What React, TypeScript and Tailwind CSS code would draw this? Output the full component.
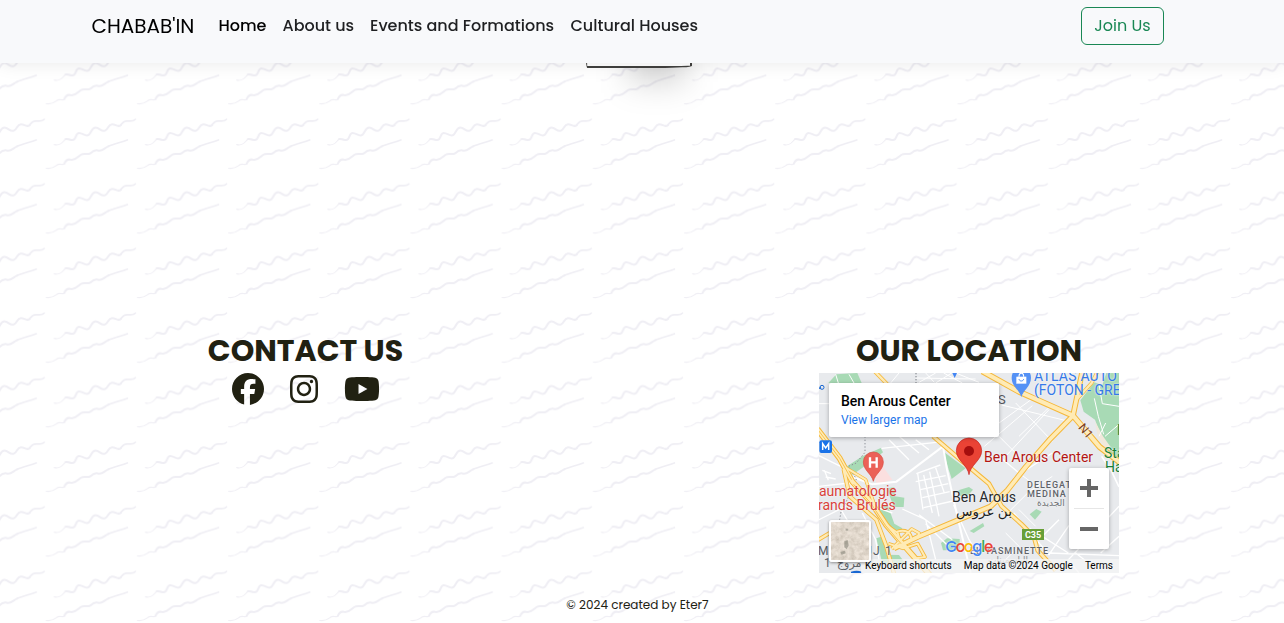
import React from "react";
import { FaFacebook, FaInstagram, FaYoutube } from "react-icons/fa6";

function WavyBackground() {
  return (
    <svg className="absolute inset-0 -z-10 h-full w-full" aria-hidden="true">
      <defs>
        <pattern
          id="waves"
          width="273.55"
          height="193.8"
          patternUnits="userSpaceOnUse"
          patternTransform="translate(0 60) scale(0.33333) translate(137 165.5)"
        >
          <g transform="translate(-137 -165.5)" fill="none" stroke="#efeef4" strokeLinecap="round" strokeLinejoin="round">
            <path strokeWidth="3.5" d="M163 254C178 257 184 252 191 243C196 235 204 236 211 239" />
            <path
              strokeWidth="6"
              d="M197 237C210 236 216 245 223 238C230 230 228 219 237 219C249 219 257 231 266 225C276 216 275 203 287 203C299 203 303 216 315 212C326 207 324 194 336 193C347 192 353 204 363 195"
            />
            <path strokeWidth="5" d="M362 195C371 185 373 182 384 183C393 183 400 185 406 178" />
            <path strokeWidth="3.5" d="M139 325C159 328 165 319 173 314C181 309 188 318 193 311" />
            <path
              strokeWidth="6"
              d="M193 311C197 301 202 297 211 299C228 302 234 290 243 284C251 279 264 285 271 280C280 272 286 268 296 272C308 274 313 264 325 259"
            />
            <path strokeWidth="5" d="M325 259C344 251 364 247 382 240" />
          </g>
        </pattern>
      </defs>
      <rect width="100%" height="100%" fill="url(#waves)" />
    </svg>
  );
}

function Navbar() {
  return (
    <header className="fixed inset-x-0 top-0 z-10 flex h-[63px] items-start bg-[#f8f9fb] pt-[7px] pr-[120px] pl-[91.5px] shadow-[0_2px_16px_rgba(0,0,0,0.08)]">
      <a className="w-[127px] pt-[4px] text-[20px] leading-[30px] whitespace-nowrap text-black" href="#">
        CHABAB'IN
      </a>
      <nav className="flex gap-4 pt-[7px] text-[16px] leading-6 font-medium whitespace-nowrap text-[#1f2022]">
        <a className="w-[48px] text-black" href="#">Home</a>
        <a className="w-[71.5px]" href="#">About us</a>
        <a className="w-[184.5px]" href="#">Events and Formations</a>
        <a className="w-[130px]" href="#">Cultural Houses</a>
      </nav>
      <button className="ml-auto h-[38px] w-[83px] rounded-md border border-[#198754] text-[16px] leading-6 whitespace-nowrap text-[#198754]">
        Join Us
      </button>
    </header>
  );
}

function Roads() {
  return (
    <svg className="absolute inset-0 h-full w-full" viewBox="0 0 900 600" aria-hidden="true">
      <rect width="900" height="600" fill="#e8eaed" />
      <g fill="#a8dab5">
        <path d="M28 30L52 4L115 0L128 30Z" />
        <path d="M784 82L826 28L850 36L862 0H900V285L856 215L828 140L794 116Z" />
        <path d="M84 280L130 250L185 225L192 238L165 260L100 305Z" />
        <path d="M374 236L440 286L398 318L386 280Z" />
        <path d="M204 346L226 342L228 370L256 374L254 402L224 402Z" />
        <path d="M178 404L206 396L226 452L250 466L232 494L205 460Z" />
        <path d="M366 510L384 496L422 498V532H372Z" />
        <path d="M418 352L450 342L462 350L448 366L424 370Z" />
        <path d="M632 424L652 408L668 416L648 440Z" />
        <path d="M452 474L492 450L496 460L464 480Z" />
        <path d="M172 496L195 488L208 520L202 545L240 546L260 572H190Z" />
      </g>
      <path d="M828 145L852 190L885 236L858 226L836 190Z" fill="#f1e8dc" />
      <path d="M166 282L190 278L220 320L172 334Z" fill="#fbdfdf" />

      <g fill="none" stroke="#fff" strokeWidth="4">
        <path d="M100 312L160 334L232 326L372 220L384 290L406 390L455 600" strokeWidth="6" />
        <path d="M188 226L372 206M210 200L270 260M240 190L300 240M290 200L330 230" />
        <path d="M292 302L364 276M290 326L380 308M304 350L388 332M310 374L392 356M314 404L402 384M314 306L340 420M332 296L360 430M350 284L376 360M296 302L312 410" />
        <path d="M548 96L750 145M496 220L640 98M540 150L650 70M590 90L700 205M540 190L600 250M620 72L700 94L600 190M560 250L690 110" strokeWidth="3" />
        <path d="M0 92H30M50 4L58 30M90 4L105 30M240 0L215 30M300 28L350 0M320 0L346 28M350 30L398 0M374 0L430 30M410 0L480 28M290 15L470 18" strokeWidth="3" />
        <path d="M404 396L450 500L480 550M300 425L400 500M320 452L388 520M250 408L320 440L350 560M600 300L540 250M584 315L700 240" />
        <path d="M584 420L690 545L748 460L820 390M632 466L748 540M660 500L720 440M900 400L748 560L780 600M690 540L900 548M845 540L900 490M770 540L840 595" />
        <path d="M570 416L630 356L700 310M640 330L600 300M560 480L600 520L560 560M600 410L650 460" strokeWidth="3" />
        <path d="M0 248L65 280M0 340L90 330L160 398L220 420M60 400L90 450L160 480M0 440L80 400M130 420L170 500L180 560" />
        <path d="M10 292L36 302M20 312L50 318M16 292L28 322" />
        <path d="M826 76L838 130L854 184M840 34L850 92L900 100M858 190L898 156M860 150L840 190" strokeWidth="3" />
        <path d="M848 250L878 296L900 342" strokeWidth="5" />
      </g>

      <path d="M138 190V238L112 270L88 280L112 318L100 350L66 416L62 440" fill="none" stroke="#8c9097" strokeWidth="3" strokeDasharray="4 6" />
      <path d="M291 0V30" fill="none" stroke="#777b80" strokeWidth="3" strokeDasharray="4 5" />

      <g fill="none" strokeLinejoin="round">
        <g stroke="#f5b83a">
          <path d="M168 -4L205 34" strokeWidth="12" />
          <path d="M-5 168L62 256L100 326L155 386L202 456L252 514L332 605" strokeWidth="18" />
          <path d="M74 288L92 370L172 440L202 520L226 605" strokeWidth="13" />
          <path d="M74 280L140 320L166 394" strokeWidth="10" />
          <path d="M202 456L236 480L250 526M278 500Q272 464 234 476M218 528L278 468L300 480L296 496M208 512L252 526L296 512L318 552L292 556" strokeWidth="11" />
          <path d="M-5 502L32 480" strokeWidth="12" />
          <path d="M225 526L296 492L420 440L515 400L565 352L620 282L690 202L762 128L790 -5" strokeWidth="17" />
          <path d="M342 190L426 262L510 332L548 400L606 452L645 492L656 532L710 592" strokeWidth="14" />
          <path d="M490 -5L600 56L762 128L842 222L905 270" strokeWidth="18" />
          <path d="M762 128L772 80L818 30L836 -5" strokeWidth="11" />
        </g>
        <g stroke="#ffebb5">
          <path d="M168 -4L205 34" strokeWidth="7" />
          <path d="M-5 168L62 256L100 326L155 386L202 456L252 514L332 605" strokeWidth="12" />
          <path d="M74 288L92 370L172 440L202 520L226 605" strokeWidth="8" />
          <path d="M74 280L140 320L166 394" strokeWidth="6" />
          <path d="M202 456L236 480L250 526M278 500Q272 464 234 476M218 528L278 468L300 480L296 496M208 512L252 526L296 512L318 552L292 556" strokeWidth="6" />
          <path d="M-5 502L32 480" strokeWidth="7" />
          <path d="M225 526L296 492L420 440L515 400L565 352L620 282L690 202L762 128L790 -5" strokeWidth="11" />
          <path d="M342 190L426 262L510 332L548 400L606 452L645 492L656 532L710 592" strokeWidth="8" />
          <path d="M490 -5L600 56L762 128L842 222L905 270" strokeWidth="12" />
          <path d="M762 128L772 80L818 30L836 -5" strokeWidth="7" />
        </g>
        <path d="M-5 168L62 256L98 320" stroke="#f5b83a" strokeWidth="2.5" />
        <path d="M104 334L155 390L200 458L246 512" stroke="#f5b83a" strokeWidth="2.5" />
      </g>
      <path d="M400 0H414L407 15Z" fill="#4285f4" />
      <circle cx="9" cy="43" r="6" fill="none" stroke="#1967d2" strokeWidth="3" />
      <path d="M0 46L6 44" stroke="#1967d2" strokeWidth="4" />
      <path d="M96 600V596Q114 590 128 596V600Z" fill="#1967d2" />
    </svg>
  );
}

function Pins() {
  return (
    <svg className="absolute inset-0 h-full w-full" viewBox="0 0 900 600" aria-hidden="true">
      <path d="M607 72C602 52 578 40 578 14C578 -25 636 -25 636 14C636 40 612 52 607 72Z" fill="#5491f5" />
      <path d="M592 11H622V32H592Z" fill="#fff" />
      <path d="M600 11C600 -3 614 -3 614 11" fill="none" stroke="#fff" strokeWidth="3.5" />
      <path d="M600 18C601 26 613 26 614 18" fill="none" stroke="#5491f5" strokeWidth="3" />
      <path d="M163 325C158 302 133 292 133 267A30 30 0 0 1 193 267C193 292 168 302 163 325Z" fill="#eb6157" stroke="#d9493f" strokeWidth="2" />
      <path d="M153 253V284M173 253V284M153 268H173" stroke="#fff" strokeWidth="7" fill="none" />
      <path d="M450 305C446 276 412 262 412 233A38 38 0 0 1 488 233C488 262 454 276 450 305Z" fill="#ea4335" stroke="#c5221f" strokeWidth="2" />
      <circle cx="450" cy="234" r="15" fill="#a50e0e" />
      <rect x="1" y="202" width="38" height="38" rx="6" fill="#1a73e8" />
      <path d="M11 231V212L20 225L29 212V231" fill="none" stroke="#fff" strokeWidth="4.5" />
    </svg>
  );
}

function SatelliteThumb() {
  return (
    <div className="absolute top-[147px] left-[10px] h-[42px] w-[42px] overflow-hidden rounded-[3px] border-2 border-white shadow-[0_1px_3px_rgba(0,0,0,0.4)]">
      <svg className="block h-full w-full" viewBox="0 0 114 114" aria-hidden="true">
        <defs>
          <filter id="ground" x="0" y="0" width="100%" height="100%">
            <feTurbulence type="fractalNoise" baseFrequency="0.07" numOctaves="4" seed="8" />
            <feColorMatrix values="0.4 0 0 0 0.55  0.38 0 0 0 0.49  0.38 0 0 0 0.41  0 0 0 0 1" />
          </filter>
        </defs>
        <rect width="114" height="114" filter="url(#ground)" />
        <path d="M44 20l8 0 0 6-8 0zM40 58l10-4 3 16-6 12-7-6zM28 90l14-4 2 8-12 4z" fill="#77776b" opacity="0.5" />
        <path d="M60 48L104 10M66 64L112 30M52 0L60 114" stroke="#e2dace" strokeWidth="3" opacity="0.5" />
      </svg>
    </div>
  );
}

function LocationMap() {
  return (
    <div className="relative h-[200px] w-[300px] overflow-hidden font-[Roboto,'DejaVu_Sans',sans-serif] whitespace-nowrap">
      <Roads />
      <span className="absolute top-[-5px] left-[215px] text-[14px] leading-[16px] tracking-[0.2px] text-[#3579e8] [text-shadow:0_0_2px_white]">ATLAS AUTO</span>
      <span className="absolute top-[9px] left-[215px] text-[14px] leading-[16px] text-[#3579e8] [text-shadow:0_0_2px_white]">(FOTON - GRE</span>
      <span className="absolute top-[20px] left-[179px] text-[13px] leading-[14px] text-[#55585d]">S</span>
      <span className="absolute top-[51px] left-[259px] rotate-50 text-[12px] leading-[14px] text-[#7a3f1c] [text-shadow:0_0_2px_white]">N1</span>
      <span className="absolute top-[49px] left-[298px] text-[14px] leading-[16px] text-[#188038]">F</span>
      <span className="absolute top-[72px] left-[285px] text-[14px] leading-[16px] text-[#188038] [text-shadow:0_0_2px_white]">Sta</span>
      <span className="absolute top-[86px] left-[286px] text-[14px] leading-[16px] text-[#188038] [text-shadow:0_0_2px_white]">Ha</span>
      <span className="absolute top-[76px] left-[165px] text-[14px] leading-[16px] tracking-[0.04px] text-[#b31412] [text-shadow:0_0_2px_white]">Ben Arous Center</span>
      <span className="absolute top-[110px] left-0 text-[14px] leading-[16px] text-[#d93f3a] [text-shadow:0_0_2px_white]">aumatologie</span>
      <span className="absolute top-[124px] left-[-1px] text-[14px] leading-[16px] text-[#d93f3a] [text-shadow:0_0_2px_white]">rands Brulés</span>
      <span className="absolute top-[116px] left-[133px] text-[14px] leading-[16px] text-[#27292c] [text-shadow:0_0_2px_white]">Ben Arous</span>
      <span className="absolute top-[130px] left-[137px] text-[13.5px] leading-[16px] text-[#1b1d20] [text-shadow:0_0_2px_white]">بن عروس</span>
      <span className="absolute top-[107px] left-[208px] text-[9px] leading-[10px] font-medium tracking-[1px] text-[#5f6368] [text-shadow:0_0_2px_white]">DELEGAT</span>
      <span className="absolute top-[116px] left-[208px] text-[9px] leading-[10px] font-medium tracking-[1px] text-[#5f6368] [text-shadow:0_0_2px_white]">MEDINA</span>
      <span className="absolute top-[125px] left-[218px] text-[9px] leading-[11px] text-[#6d7175] [text-shadow:0_0_2px_white]">الجديدة</span>
      <span className="absolute top-[156px] left-[203px] h-[11px] w-[22px] bg-[#689f38] text-center text-[9px] leading-[12px] font-bold text-white">C35</span>
      <span className="absolute top-[173px] left-[151px] text-[9px] leading-[10px] font-medium tracking-[0.95px] text-[#5f6368] [text-shadow:0_0_2px_white]">EL YASMINETTE</span>
      <span className="absolute top-[182px] left-[169px] text-[9px] leading-[11px] text-[#888b90]">الياسمينات</span>
      <span className="absolute top-[172px] left-[-1px] text-[12px] leading-[13px] tracking-[1px] text-[#55595e]">M</span>
      <span className="absolute top-[172px] left-[45px] text-[12px] leading-[13px] tracking-[1.2px] text-[#55595e] [text-shadow:0_0_2px_white]">UJ 1</span>
      <Pins />

      <div className="absolute top-[164px] left-[126.5px] flex font-[Poppins,sans-serif] text-[15px] leading-[20px] font-medium tracking-[-1.3px] [text-shadow:0_0_2px_white]">
        <span className="text-[#4285f4]">G</span>
        <span className="text-[#ea4335]">o</span>
        <span className="text-[#fbbc04]">o</span>
        <span className="text-[#4285f4]">g</span>
        <span className="text-[#34a853]">l</span>
        <span className="text-[#ea4335]">e</span>
      </div>

      <div className="absolute bottom-0 left-[42px] flex h-[14px] w-[258px] justify-between bg-[#f5f5f5]/75 pr-[6px] pl-[4px] text-[10px] leading-[14px] text-black">
        <span>Keyboard shortcuts</span>
        <span>Map data ©2024 Google</span>
        <span>Terms</span>
      </div>
      <span className="absolute top-[184px] left-[5px] text-[12px] leading-[13px] text-[#5f6368]">1</span>
      <span className="absolute top-[184px] left-[18px] text-[11px] leading-[14px] text-[#5f6368]">مروج</span>
      <SatelliteThumb />

      <div className="absolute top-[10px] left-[10px] flex h-[54px] w-[170px] flex-col rounded-[2px] bg-white pt-[10px] pl-[12px] shadow-[0_1px_4px_rgba(0,0,0,0.3)]">
        <span className="text-[14px] leading-[16px] font-medium text-black">Ben Arous Center</span>
        <span className="mt-[4px] text-[12px] leading-[14px] text-[#1a73e8]">View larger map</span>
      </div>

      <div className="absolute top-[95px] left-[250px] flex h-[81px] w-[40px] flex-col items-center rounded-[2px] bg-white shadow-[0_1px_4px_rgba(0,0,0,0.3)]">
        <svg className="h-[40px] w-[40px]" viewBox="0 0 40 40" aria-hidden="true">
          <path d="M11 20H29M20 11V29" stroke="#666" strokeWidth="4" />
        </svg>
        <div className="h-px w-[30px] bg-[#e6e6e6]" />
        <svg className="h-[40px] w-[40px]" viewBox="0 0 40 40" aria-hidden="true">
          <path d="M11 20H29" stroke="#666" strokeWidth="4" />
        </svg>
      </div>
    </div>
  );
}

export default function App() {
  return (
    <div className="relative isolate flex h-[623px] flex-col overflow-hidden bg-white font-[Poppins,Inter,sans-serif]">
      <WavyBackground />
      <Navbar />
      <main className="flex h-[333px] shrink-0 items-start pt-[28px] pl-[584.5px]">
        <div className="relative h-[40px] w-[107.5px]">
          <div className="absolute top-0 left-[44px] h-[54px] w-[56px] bg-black/18 blur-[16px]" />
          <div className="relative h-full rounded-[255px_15px_225px_15px/15px_225px_15px_255px] border-2 border-[#41403e] bg-white" />
        </div>
      </main>
      <footer className="flex flex-1 flex-col text-[#212112]">
        <div className="flex justify-between pr-[165px] pl-[155px]">
          <section className="flex w-[301px] flex-col items-center">
            <h2 className="text-[30px] leading-[36px] font-bold whitespace-nowrap">CONTACT US</h2>
            <div className="mt-[4px] flex gap-[26px]">
              <FaFacebook className="h-[32px] w-[32px]" />
              <FaInstagram className="h-[32px] w-[28px]" />
              <FaYoutube className="h-[32px] w-[36px]" />
            </div>
          </section>
          <section className="flex w-[300px] flex-col items-center">
            <h2 className="mb-[4px] text-[30px] leading-[36px] font-bold whitespace-nowrap">OUR LOCATION</h2>
            <LocationMap />
          </section>
        </div>
        <p className="mt-[23px] pr-[9px] text-center text-[12px] leading-[18px]">© 2024 created by Eter7</p>
      </footer>
    </div>
  );
}
